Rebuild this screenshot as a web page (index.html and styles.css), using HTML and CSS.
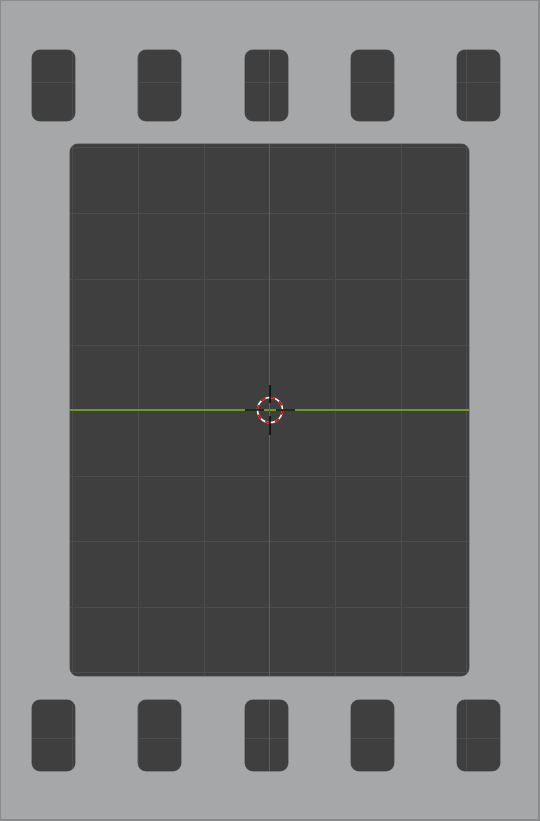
FILE: index.html
```html
<!DOCTYPE html>
<html>
<head>
<meta charset="utf-8">
<link rel="stylesheet" href="styles.css">
</head>
<body>
<div class="frame">
  <div class="holes top">
    <div class="hole"></div>
    <div class="hole"></div>
    <div class="hole axis"></div>
    <div class="hole"></div>
    <div class="hole"></div>
  </div>
  <div class="panel">
    <div class="x-axis"></div>
    <div class="y-axis"></div>
    <svg class="cursor" width="60" height="60" viewBox="0 0 60 60">
      <circle cx="30" cy="30" r="12.5" fill="none" stroke="#ffffff" stroke-width="1.6"/>
      <circle cx="30" cy="30" r="12.5" fill="none" stroke="#e00000" stroke-width="1.6" stroke-dasharray="4.9 4.9"/>
      <g stroke="#000" stroke-width="1.4">
        <line x1="30" y1="5" x2="30" y2="23"/>
        <line x1="30" y1="36" x2="30" y2="55"/>
        <line x1="5" y1="30" x2="24" y2="30"/>
        <line x1="36" y1="30" x2="55" y2="30"/>
      </g>
    </svg>
  </div>
  <div class="holes bottom">
    <div class="hole"></div>
    <div class="hole"></div>
    <div class="hole axis"></div>
    <div class="hole"></div>
    <div class="hole"></div>
  </div>
</div>
</body>
</html>
```

FILE: styles.css
```css
html, body {
  margin: 0;
  padding: 0;
  background: #a6a7a8;
}
.frame {
  box-sizing: border-box;
  width: 540px;
  height: 821px;
  border-top: 1px solid #8a8b8c;
  border-left: 1px solid #8a8b8c;
  border-right: 2px solid #8a8b8c;
  border-bottom: 2px solid #8a8b8c;
  background: #a6a7a8;
  display: flex;
  flex-direction: column;
  padding-top: 49px;
  gap: 23px;
}
.holes {
  display: flex;
  justify-content: space-between;
  padding: 0 38px 0 31px;
  height: 71px;
}
.holes.bottom {
  margin-top: 1px;
  --hy: 38px;
}
.holes.top {
  --hy: 32px;
}
.hole {
  --vx: -10px;
  position: relative;
  width: 43px;
  height: 71px;
  border-radius: 8px;
  background-color: #3f3f3f;
  background-image:
    linear-gradient(to right, transparent var(--vx), #4c4c4c var(--vx), #4c4c4c calc(var(--vx) + 1px), transparent calc(var(--vx) + 1px)),
    linear-gradient(to bottom, transparent var(--hy), #4c4c4c var(--hy), #4c4c4c calc(var(--hy) + 1px), transparent calc(var(--hy) + 1px));
  box-shadow: 0 0 0 0.5px #5a5a5a;
}
.hole:nth-child(1) { --vx: 40px; }
.hole:nth-child(2) { --vx: 0px; }
.hole:nth-child(5) { --vx: 9px; }
.hole.axis::before {
  content: "";
  position: absolute;
  left: 24px;
  top: 0;
  bottom: 0;
  width: 1px;
  background: #b23a50;
}
.panel {
  position: relative;
  margin-left: 69px;
  width: 399px;
  height: 532px;
  border-radius: 8px;
  background-color: #3f3f3f;
  box-shadow: 0 0 0 0.5px #5a5a5a;
  background-image:
    linear-gradient(to right,
      transparent 2px, #4c4c4c 2px, #4c4c4c 3px, transparent 3px,
      transparent 68px, #4c4c4c 68px, #4c4c4c 69px, transparent 69px,
      transparent 134px, #4c4c4c 134px, #4c4c4c 135px, transparent 135px,
      transparent 265px, #4c4c4c 265px, #4c4c4c 266px, transparent 266px,
      transparent 331px, #4c4c4c 331px, #4c4c4c 332px, transparent 332px,
      transparent 396px, #4c4c4c 396px, #4c4c4c 397px, transparent 397px),
    linear-gradient(to bottom,
      transparent 3px, #4c4c4c 3px, #4c4c4c 4px, transparent 4px,
      transparent 69px, #4c4c4c 69px, #4c4c4c 70px, transparent 70px,
      transparent 135px, #4c4c4c 135px, #4c4c4c 136px, transparent 136px,
      transparent 201px, #4c4c4c 201px, #4c4c4c 202px, transparent 202px,
      transparent 332px, #4c4c4c 332px, #4c4c4c 333px, transparent 333px,
      transparent 397px, #4c4c4c 397px, #4c4c4c 398px, transparent 398px,
      transparent 463px, #4c4c4c 463px, #4c4c4c 464px, transparent 464px,
      transparent 528px, #4c4c4c 528px, #4c4c4c 529px, transparent 529px);
}
.x-axis {
  position: absolute;
  left: 0;
  right: 0;
  top: 265px;
  height: 2px;
  background: #6c9a22;
}
.y-axis {
  position: absolute;
  top: 0;
  bottom: 0;
  left: 199px;
  width: 1px;
  background: #b23a50;
}
.cursor {
  position: absolute;
  left: 169.5px;
  top: 236px;
}
```
